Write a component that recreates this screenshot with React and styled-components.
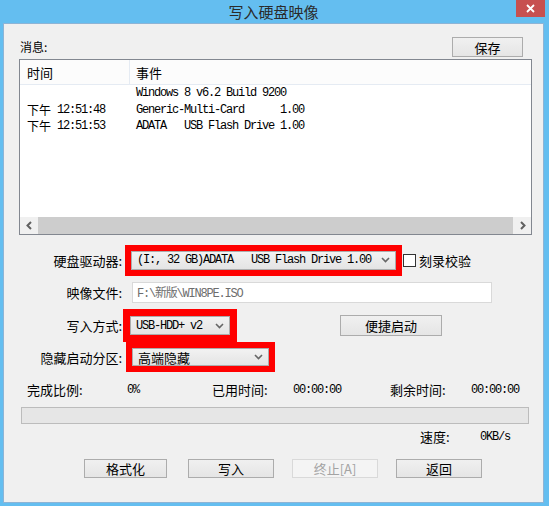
import styled, { createGlobalStyle } from 'styled-components'

const sans = `"Noto Sans CJK SC", "Noto Sans", sans-serif`
const mono = `"Liberation Mono", "Noto Sans CJK SC", monospace`

const GlobalStyle = createGlobalStyle`
  html, body {
    margin: 0;
    padding: 0;
    background: #64BEF0;
  }
  body {
    width: 549px;
    height: 506px;
    overflow: hidden;
  }
`

const Frame = styled.div`
  width: 549px;
  height: 506px;
  box-sizing: border-box;
  display: flex;
  flex-direction: column;
  padding: 0 5px 3px 3px;
  background: #64BEF0;
  font-family: ${sans};
  color: #000;
`

const TitleBar = styled.div`
  height: 23px;
  flex: none;
  display: grid;
  grid-template-columns: 1fr auto 1fr;
  align-items: start;
`

const Title = styled.div`
  font-size: 15px;
  line-height: 24px;
  color: #2b2b2b;
`

const CloseBox = styled.div`
  justify-self: end;
  width: 29px;
  height: 17px;
  margin-right: -1px;
  background: #C75050;
  display: flex;
  align-items: center;
  justify-content: center;
`

const Client = styled.div`
  flex: 1;
  display: flex;
  flex-direction: column;
  background: #F0F0F0;
  border: 1px solid #8DB4D6;
`

const TopRow = styled.div`
  display: flex;
  justify-content: space-between;
  align-items: flex-end;
  padding: 13px 20px 0 16px;
`

const Caption = styled.span`
  font-size: 12px;
  line-height: 16px;
  padding-bottom: 2px;
`

const Button = styled.button`
  box-sizing: border-box;
  width: ${p => p.$w}px;
  height: ${p => p.$h || 19}px;
  padding: 0;
  border: 1px solid ${p => (p.disabled ? '#D9D9D9' : '#ACACAC')};
  background: ${p => (p.disabled ? '#F4F4F4' : 'linear-gradient(#F0F0F0, #E5E5E5)')};
  color: ${p => (p.disabled ? '#A3A3A3' : '#000')};
  font-family: ${sans};
  font-size: 13px;
  line-height: 1;
`

const ListView = styled.div`
  height: 176px;
  margin: 2px 11px 0 15px;
  box-sizing: border-box;
  display: flex;
  flex-direction: column;
  background: #fff;
  border: 1px solid #828790;
`

const ListHeader = styled.div`
  height: 24px;
  display: grid;
  grid-template-columns: 110px 1fr;
  background: #FCFCFC;
  border-bottom: 1px solid #E5EBF3;
  font-size: 13px;
`

const HeadCell = styled.div`
  display: flex;
  align-items: center;
  padding-left: ${p => p.$pad}px;
  border-right: ${p => (p.$divider ? '1px solid #E5EBF3' : 'none')};
`

const ListBody = styled.div`
  flex: 1;
`

const ListRow = styled.div`
  height: 16px;
  display: grid;
  grid-template-columns: 110px 1fr;
  align-items: center;
  font-family: ${mono};
  font-size: 12px;
  letter-spacing: -1.2px;
  white-space: pre;
`

const Cell = styled.div`
  display: flex;
  align-items: center;
  padding-left: ${p => p.$pad}px;
`

const Cjk = styled.span`
  font-family: ${sans};
  font-size: 12px;
  letter-spacing: 0;
  margin-right: 6px;
`

const ScrollBar = styled.div`
  height: 17px;
  display: flex;
  background: #F0F0F0;
`

const ScrollArrow = styled.div`
  width: 17px;
  display: flex;
  align-items: center;
  justify-content: center;
`

const ScrollThumb = styled.div`
  flex: 1;
  margin: 0 1px;
  background: #CDCDCD;
`

const Form = styled.div`
  display: flex;
  flex-direction: column;
  padding-top: 10px;
`

const FormRow = styled.div`
  height: ${p => p.$h || 30}px;
  margin-top: ${p => p.$top || 0}px;
  display: flex;
  align-items: center;
`

const Label = styled.div`
  width: 118px;
  flex: none;
  text-align: right;
  font-size: 13px;
  white-space: nowrap;
`

const Combo = styled.div`
  box-sizing: border-box;
  width: ${p => p.$w}px;
  height: ${p => p.$h || 19}px;
  margin-left: ${p => p.$gap}px;
  display: flex;
  align-items: center;
  justify-content: space-between;
  padding: 0 5px 0 5px;
  border: 1px solid #ACACAC;
  background: linear-gradient(#F2F2F2, #E4E4E4);
  outline: ${p => p.$ring}px solid #FF0000;
  white-space: pre;
`

const ComboText = styled.span`
  font-family: ${p => (p.$cjk ? sans : mono)};
  font-size: ${p => (p.$cjk ? 13 : 12)}px;
  letter-spacing: ${p => (p.$cjk ? 0 : -1.2)}px;
`

const CheckBox = styled.span`
  width: 13px;
  height: 13px;
  box-sizing: border-box;
  margin-left: 7px;
  border: 1px solid #333;
  background: #fff;
`

const CheckLabel = styled.span`
  margin-left: 3px;
  font-size: 13px;
`

const TextField = styled.div`
  box-sizing: border-box;
  width: 360px;
  height: 21px;
  margin-left: 10px;
  padding-left: 4px;
  display: flex;
  align-items: center;
  border: 1px solid #D9D9D9;
  background: #fff;
  color: #6D6D6D;
  font-family: ${mono};
  font-size: 12px;
  letter-spacing: -1.2px;
`

const StatsRow = styled.div`
  height: 18px;
  margin-top: 8px;
  padding-left: 23px;
  display: grid;
  grid-template-columns: 100px 85px 81px 97px 81px auto;
  align-items: center;
`

const StatLabel = styled.span`
  font-size: 13px;
`

const StatValue = styled.span`
  font-family: ${mono};
  font-size: 12px;
  letter-spacing: -1.2px;
`

const Progress = styled.div`
  height: 17px;
  margin: 9px 14px 0 17px;
  box-sizing: border-box;
  background: #E6E6E6;
  border: 1px solid #BCBCBC;
`

const SpeedRow = styled.div`
  height: 18px;
  margin-top: 3px;
  padding-left: 416px;
  display: grid;
  grid-template-columns: 60px auto;
  align-items: center;
`

const ButtonRow = styled.div`
  margin-top: 14px;
  padding-left: 80px;
  display: flex;
  gap: 18px;
`

const Chevron = ({ dir }) => (
  <svg width="6" height="9" viewBox="0 0 6 9">
    <path
      d={dir === 'left' ? 'M5 1 L1.5 4.5 L5 8' : 'M1 1 L4.5 4.5 L1 8'}
      stroke="#606060"
      strokeWidth="2"
      fill="none"
    />
  </svg>
)

const DropArrow = () => (
  <svg width="9" height="6" viewBox="0 0 9 6">
    <path d="M1 1 L4.5 4.5 L8 1" stroke="#666" strokeWidth="1.6" fill="none" />
  </svg>
)

const events = [
  { time: null, text: 'Windows 8 v6.2 Build 9200' },
  { time: '12:51:48', text: 'Generic-Multi-Card      1.00' },
  { time: '12:51:53', text: 'ADATA   USB Flash Drive 1.00' },
]

export default function App() {
  return (
    <>
      <GlobalStyle />
      <Frame>
        <TitleBar>
          <span />
          <Title>写入硬盘映像</Title>
          <CloseBox>
            <svg width="9" height="9" viewBox="0 0 9 9">
              <path d="M1 1 L8 8 M8 1 L1 8" stroke="#fff" strokeWidth="1.8" />
            </svg>
          </CloseBox>
        </TitleBar>

        <Client>
          <TopRow>
            <Caption>消息:</Caption>
            <Button $w={71} $h={20}>保存</Button>
          </TopRow>

          <ListView>
            <ListHeader>
              <HeadCell $pad={7} $divider>时间</HeadCell>
              <HeadCell $pad={6}>事件</HeadCell>
            </ListHeader>
            <ListBody>
              {events.map((e, i) => (
                <ListRow key={i}>
                  <Cell $pad={7}>
                    {e.time && (
                      <>
                        <Cjk>下午</Cjk>{e.time}
                      </>
                    )}
                  </Cell>
                  <Cell $pad={6}>{e.text}</Cell>
                </ListRow>
              ))}
            </ListBody>
            <ScrollBar>
              <ScrollArrow><Chevron dir="left" /></ScrollArrow>
              <ScrollThumb />
              <ScrollArrow><Chevron dir="right" /></ScrollArrow>
            </ScrollBar>
          </ListView>

          <Form>
            <FormRow>
              <Label>硬盘驱动器:</Label>
              <Combo $w={265} $gap={9} $ring={6}>
                <ComboText>(I:, 32 GB)ADATA   USB Flash Drive 1.00</ComboText>
                <DropArrow />
              </Combo>
              <CheckBox />
              <CheckLabel>刻录校验</CheckLabel>
            </FormRow>
            <FormRow $top={2}>
              <Label>映像文件:</Label>
              <TextField>F:\新版\WIN8PE.ISO</TextField>
            </FormRow>
            <FormRow $top={3} $h={31}>
              <Label>写入方式:</Label>
              <Combo $w={100} $gap={8} $ring={7}>
                <ComboText>USB-HDD+ v2</ComboText>
                <DropArrow />
              </Combo>
              <Button $w={102} $h={21} style={{ marginLeft: 110 }}>便捷启动</Button>
            </FormRow>
            <FormRow $top={1}>
              <Label>隐藏启动分区:</Label>
              <Combo $w={137} $h={18} $gap={10} $ring={6}>
                <ComboText $cjk>高端隐藏</ComboText>
                <DropArrow />
              </Combo>
            </FormRow>
          </Form>

          <StatsRow>
            <StatLabel>完成比例:</StatLabel>
            <StatValue>0%</StatValue>
            <StatLabel>已用时间:</StatLabel>
            <StatValue>00:00:00</StatValue>
            <StatLabel>剩余时间:</StatLabel>
            <StatValue>00:00:00</StatValue>
          </StatsRow>

          <Progress />

          <SpeedRow>
            <StatLabel>速度:</StatLabel>
            <StatValue>0KB/s</StatValue>
          </SpeedRow>

          <ButtonRow>
            <Button $w={83}>格式化</Button>
            <Button $w={86} style={{ marginLeft: 3 }}>写入</Button>
            <Button $w={86} disabled>终止[A]</Button>
            <Button $w={86}>返回</Button>
          </ButtonRow>
        </Client>
      </Frame>
    </>
  )
}
